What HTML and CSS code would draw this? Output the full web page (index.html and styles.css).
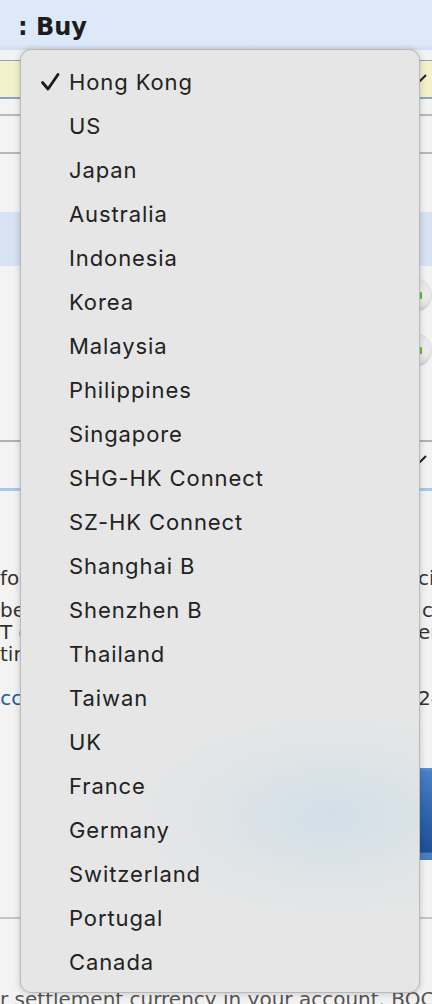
FILE: index.html
```html
<!DOCTYPE html>
<html lang="en">
<head>
<meta charset="utf-8">
<title>Buy</title>
<link rel="stylesheet" href="styles.css">
</head>
<body>
<div class="page">
  <header class="hdr"><h1 class="title">: Buy</h1></header>

  <div class="field field-yellow">
    <svg class="chev" width="14" height="8" viewBox="0 0 14 8"><path d="M1 1 L7 7 L13 1" fill="none" stroke="#222" stroke-width="2"/></svg>
  </div>

  <div class="rule rule-a"></div>
  <div class="rule rule-b"></div>

  <div class="band"></div>

  <div class="radio-row radio-row-1"><span class="radio"><span class="dot"></span></span></div>
  <div class="radio-row radio-row-2"><span class="radio"><span class="dot"></span></span></div>

  <div class="field field-plain">
    <svg class="chev" width="14" height="8" viewBox="0 0 14 8"><path d="M1 1 L7 7 L13 1" fill="none" stroke="#222" stroke-width="2"/></svg>
  </div>

  <div class="blue-rule"></div>

  <div class="para">
    <div class="line line-first"><span class="l">for each order placed, the</span><span class="r">cip</span></div>
    <div class="line line-gap"><span class="l">be charged at the prevailing</span><span class="r r-c">c</span></div>
    <div class="line"><span class="l">T cut-off time will be exec</span><span class="r">er</span></div>
    <div class="line"><span class="l">time of the next trading day.</span><span class="r"></span></div>
    <div class="line line-link"><span class="l link">account details</span><span class="r">24</span></div>
  </div>

  <div class="btn-row"><span class="btn"></span></div>

  <div class="rule rule-c"></div>

  <p class="foot">r settlement currency in your account. BOC</p>
</div>

<div class="menu">
  <div class="item selected"><svg class="check" width="20" height="20" viewBox="0 0 20 20"><path d="M2.5 10.5 L8 17 L18 2.5" fill="none" stroke="#1a1a1a" stroke-width="2.8" stroke-linecap="round" stroke-linejoin="round"/></svg>Hong Kong</div>
  <div class="item">US</div>
  <div class="item">Japan</div>
  <div class="item">Australia</div>
  <div class="item">Indonesia</div>
  <div class="item">Korea</div>
  <div class="item">Malaysia</div>
  <div class="item">Philippines</div>
  <div class="item">Singapore</div>
  <div class="item">SHG-HK Connect</div>
  <div class="item">SZ-HK Connect</div>
  <div class="item">Shanghai B</div>
  <div class="item">Shenzhen B</div>
  <div class="item">Thailand</div>
  <div class="item">Taiwan</div>
  <div class="item">UK</div>
  <div class="item">France</div>
  <div class="item">Germany</div>
  <div class="item">Switzerland</div>
  <div class="item">Portugal</div>
  <div class="item">Canada</div>
</div>
</body>
</html>
```

FILE: styles.css
```css
html, body {
  margin: 0;
  padding: 0;
}
body {
  width: 432px;
  height: 1004px;
  overflow: hidden;
  background: #f3f3f3;
  font-family: "DejaVu Sans", Verdana, sans-serif;
  position: relative;
}
.page {
  display: flex;
  flex-direction: column;
}
.hdr {
  height: 50px;
  background: linear-gradient(#dde9f9 0, #dde9f9 44px, #d3dff0 50px);
  display: flex;
  align-items: flex-end;
  padding-left: 18px;
  box-sizing: border-box;
}
.title {
  margin: 0 0 10px 0;
  font-size: 24px;
  line-height: 26px;
  font-weight: bold;
  color: #1c1c1c;
}
.field {
  display: flex;
  justify-content: flex-end;
  align-items: center;
  padding-right: 5px;
  box-sizing: border-box;
}
.field-yellow {
  margin-top: 10px;
  height: 39px;
  background: #f3f2cd;
  border-top: 1px solid #8ea3bf;
  border-bottom: 2px solid #8ea3bf;
}
.field-yellow .chev { margin-top: -2px; }
.rule {
  height: 2px;
  background: #b9b9b9;
}
.rule-a { margin-top: 15px; }
.rule-b { margin-top: 36px; }
.band {
  margin-top: 58px;
  height: 54px;
  background: #d7e3f2;
}
.radio-row {
  height: 32px;
  display: flex;
  padding-left: 404px;
}
.radio-row-1 { margin-top: 13px; }
.radio-row-2 { margin-top: 23px; }
.radio {
  width: 32px;
  height: 32px;
  border-radius: 50%;
  background: radial-gradient(circle at 50% 45%, #f7f7f7 0, #e8e8e8 55%, #c9c9c9 80%, #b5b5b5 100%);
  display: flex;
  align-items: center;
  justify-content: center;
}
.dot {
  width: 7px;
  height: 7px;
  background: #5fbf2f;
  border-radius: 1px;
}
.field-plain {
  margin-top: 74px;
  height: 36px;
  border-top: 2px solid #b0b0b0;
  align-items: flex-start;
  padding-top: 13px;
}
.blue-rule {
  margin-top: 12px;
  height: 3px;
  background: #a9c9ec;
}
.para {
  margin-top: 76px;
  display: flex;
  flex-direction: column;
  font-size: 20px;
  line-height: 22px;
  color: #333;
}
.line {
  display: flex;
  height: 22px;
  white-space: nowrap;
}
.line-gap { margin-top: 10px; }
.line-link { margin-top: 22px; }
.l {
  flex: 1;
  overflow: hidden;
}
.r {
  width: 14px;
  overflow: hidden;
}
.r-c { padding-left: 4px; width: 10px; }
.link {
  color: #1f5c99;
  text-indent: -12px;
}
.btn-row {
  margin-top: 59px;
  display: flex;
  justify-content: flex-end;
}
.btn {
  width: 200px;
  height: 92px;
  background: linear-gradient(#5e92d2 0, #4a80c4 4px, #3b70b5 30%, #23569b 80%, #1f4f92 91%, #4c7fc2 93%, #4a7cc0 100%);
}
.rule-c {
  margin-top: 57px;
  background: #c4c4c4;
}
.foot {
  margin: 69px 0 0 0;
  font-size: 20px;
  line-height: 22px;
  color: #555;
  white-space: nowrap;
}

.menu {
  position: absolute;
  left: 20px;
  top: 49px;
  width: 400px;
  height: 944px;
  box-sizing: border-box;
  border: 1px solid #b9b9b9;
  border-radius: 11px;
  padding: 10px 0 8px 0;
  background:
    radial-gradient(ellipse 210px 110px at 310px 766px, rgba(200, 220, 232, 0.7), rgba(215, 226, 232, 0.3) 65%, rgba(230, 230, 230, 0) 100%),
    #e6e6e6;
  box-shadow: 0 0 6px rgba(0, 0, 0, 0.12), 0 2px 10px rgba(0, 0, 0, 0.08);
  font-family: Inter, "Noto Sans", sans-serif;
  font-size: 22px;
  letter-spacing: 0.9px;
  color: #222;
}
.item {
  height: 44px;
  display: flex;
  align-items: center;
  padding-left: 48px;
  position: relative;
}
.check {
  position: absolute;
  left: 19px;
  top: 12px;
}
```
